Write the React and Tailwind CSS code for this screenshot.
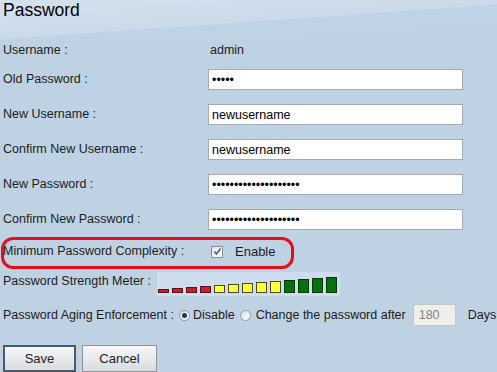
import React from "react"

const bars = [
  { h: "h-[4px]", c: "bg-[#c8202e] border-[#5a1016]" },
  { h: "h-[5px]", c: "bg-[#c8202e] border-[#5a1016]" },
  { h: "h-[6px]", c: "bg-[#c8202e] border-[#5a1016]" },
  { h: "h-[7px]", c: "bg-[#c8202e] border-[#5a1016]" },
  { h: "h-[8px]", c: "bg-[#ffff3a] border-[#4a4a20]" },
  { h: "h-[9px]", c: "bg-[#ffff3a] border-[#4a4a20]" },
  { h: "h-[10px]", c: "bg-[#ffff3a] border-[#4a4a20]" },
  { h: "h-[11px]", c: "bg-[#ffff3a] border-[#4a4a20]" },
  { h: "h-[12px]", c: "bg-[#ffff3a] border-[#4a4a20]" },
  { h: "h-[13px]", c: "bg-[#05700f] border-[#033a08]" },
  { h: "h-[14px]", c: "bg-[#05700f] border-[#033a08]" },
  { h: "h-[15px]", c: "bg-[#05700f] border-[#033a08]" },
  { h: "h-[16px]", c: "bg-[#05700f] border-[#033a08]" },
]

const TextField = ({ value, type = "text" }) => (
  <input
    type={type}
    defaultValue={value}
    readOnly
    className="w-[255px] h-[21px] border border-[#a3abb3] bg-white px-[3px] text-[12.5px] text-black outline-none"
  />
)

const Row = ({ label, children, className = "" }) => (
  <div className={`flex items-center h-[21px] ${className}`}>
    <span className="w-[205px] shrink-0">{label}</span>
    {children}
  </div>
)

const Radio = ({ checked }) => (
  <span className="w-[11px] h-[11px] rounded-full border border-[#8d99a6] bg-[linear-gradient(135deg,#d9dee4,#ffffff)] flex items-center justify-center shrink-0">
    {checked && <span className="w-[5px] h-[5px] rounded-full bg-[#26384f]" />}
  </span>
)

export default function App() {
  return (
    <div className="relative w-[497px] h-[372px] overflow-hidden bg-[#bed2e4] font-['Liberation_Sans',Arial,sans-serif] text-[12.5px] text-[#1c1c1c]">
      <div className="h-[40px] bg-[linear-gradient(176deg,#d4e1ed_0%,#cadaea_52%,#c0d3e5_53%,#bed2e4_100%)] pl-[3px] pt-[2px]">
        <h1 className="text-[17.5px] leading-none text-black">Password</h1>
      </div>

      <div className="pl-[3px]">
        <Row label="Username :">
          <span className="pl-[2px]">admin</span>
        </Row>
        <div className="flex flex-col gap-[14px] mt-[8px]">
          <Row label="Old Password :">
            <TextField type="password" value="abcde" />
          </Row>
          <Row label="New Username :">
            <TextField value="newusername" />
          </Row>
          <Row label="Confirm New Username :">
            <TextField value="newusername" />
          </Row>
          <Row label="New Password :">
            <TextField type="password" value="abcdefghijklmnopqrst" />
          </Row>
          <Row label="Confirm New Password :">
            <TextField type="password" value="abcdefghijklmnopqrst" />
          </Row>
        </div>

        <Row label="Minimum Password Complexity :" className="mt-[11px]">
          <span className="ml-[3px] w-[12px] h-[12px] border border-[#8b9096] bg-[linear-gradient(135deg,#dfe3e8,#ffffff)] flex items-center justify-center">
            <svg width="9" height="9" viewBox="0 0 9 9">
              <path d="M1.5 4.5 L3.5 7 L7.5 1.5" fill="none" stroke="#4a5878" strokeWidth="1.5" />
            </svg>
          </span>
          <span className="ml-[12px] text-[13px]">Enable</span>
        </Row>

        <div className="flex items-start h-[24px] mt-[10px]">
          <span className="w-[154px] shrink-0 leading-[19px]">Password Strength Meter :</span>
          <div className="w-[183px] h-[24px] bg-[#cedded] flex items-end gap-[3px] pl-[1px] pb-[3px]">
            {bars.map((b, i) => (
              <span key={i} className={`w-[11px] border ${b.h} ${b.c}`} />
            ))}
          </div>
        </div>

        <div className="flex items-center h-[22px] mt-[8px] whitespace-nowrap">
          <span>Password Aging Enforcement :</span>
          <span className="ml-[5px]"><Radio checked /></span>
          <span className="ml-[3px]">Disable</span>
          <span className="ml-[5px]"><Radio /></span>
          <span className="ml-[5px]">Change the password after</span>
          <input
            defaultValue="180"
            readOnly
            className="ml-[7px] w-[43px] h-[22px] border border-[#c4c6c4] bg-[#efeee8] pl-[5px] text-[12.5px] text-[#808080] outline-none"
          />
          <span className="ml-[12px]">Days</span>
        </div>

        <div className="flex gap-[6px] mt-[19px]">
          <button className="w-[73px] h-[27px] border-2 border-[#4f5a66] bg-[linear-gradient(#f7f7f7,#d9dcdf)] text-[13px] text-[#222]">
            Save
          </button>
          <button className="w-[75px] h-[27px] border border-[#8c939b] bg-[linear-gradient(#f7f7f7,#d9dcdf)] text-[13px] text-[#222]">
            Cancel
          </button>
        </div>
      </div>

      {/* annotation around the complexity row */}
      <div className="absolute left-[1px] top-[237px] w-[293px] h-[32px] border-[3px] border-[#e3101c] rounded-[12px]" />
    </div>
  )
}
